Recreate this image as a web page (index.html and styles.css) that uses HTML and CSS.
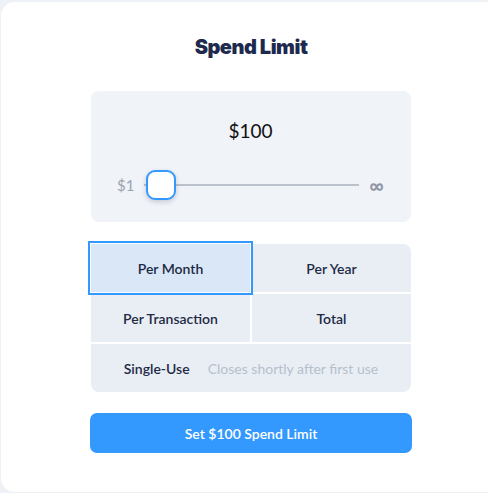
FILE: index.html
```html
<!DOCTYPE html>
<html lang="en">
<head>
<meta charset="UTF-8">
<meta name="viewport" content="width=device-width, initial-scale=1.0">
<title>Spend Limit</title>
<link rel="stylesheet" href="styles.css">
</head>
<body>
  <div class="card">
    <div class="content">
      <h1 class="title">Spend Limit</h1>

      <div class="amount-panel">
        <div class="amount">$100</div>
        <div class="slider">
          <span class="slider-label">$1</span>
          <div class="track">
            <div class="thumb"></div>
          </div>
          <span class="slider-label infinity">&infin;</span>
        </div>
      </div>

      <div class="periods">
        <div class="period selected">Per Month</div>
        <div class="period top-right">Per Year</div>
        <div class="period">Per Transaction</div>
        <div class="period">Total</div>
        <div class="period wide">
          <span>Single-Use</span>
          <span class="hint">Closes shortly after first use</span>
        </div>
      </div>

      <button class="submit">Set $100 Spend Limit</button>
    </div>
  </div>
</body>
</html>
```

FILE: styles.css
```css
html, body {
  margin: 0;
  height: 100%;
  overflow: hidden;
}

body {
  background-color: #eef1f5;
  font-family: Lato, "Liberation Sans", sans-serif;
  color: #1e2a44;
}

.card {
  margin: 2px 0 0 1px;
  width: 500px;
  height: 490px;
  background-color: #fff;
  border-radius: 14px;
  display: flex;
  justify-content: center;
}

.content {
  width: 320px;
  display: flex;
  flex-direction: column;
}

.title {
  margin: 33px 0 0;
  height: 56px;
  font-family: Inter, sans-serif;
  font-weight: 900;
  font-size: 20px;
  letter-spacing: -0.5px;
  line-height: 24px;
  text-align: center;
  color: #1d2a4d;
}

.amount-panel {
  background-color: #f0f3f8;
  border-radius: 8px;
  padding: 28px 27px 22px 26px;
}

.amount {
  font-size: 19px;
  line-height: 24px;
  text-align: center;
  color: #111;
}

.slider {
  margin-top: 27px;
  height: 30px;
  display: flex;
  align-items: center;
  gap: 10px;
}

.slider-label {
  font-size: 15px;
  color: #9aa2b0;
}

.infinity {
  font-size: 20px;
  font-weight: 700;
  color: #8e96a6;
}

.track {
  flex: 1;
  height: 2px;
  background-color: #bcc2cc;
  position: relative;
}

.thumb {
  position: absolute;
  left: 2px;
  top: -14px;
  width: 30px;
  height: 30px;
  box-sizing: border-box;
  border: 2px solid #3399ff;
  border-radius: 9px;
  background-color: #fff;
  box-shadow: 0 2px 5px rgba(30, 42, 68, 0.2);
}

.periods {
  margin-top: 22px;
  display: grid;
  grid-template-columns: 1fr 1fr;
  gap: 2px;
}

.period {
  height: 48px;
  display: flex;
  justify-content: center;
  align-items: center;
  gap: 18px;
  background-color: #e9eef5;
  font-size: 14px;
  font-weight: 600;
}

.period.selected {
  position: relative;
  z-index: 1;
  background-color: #d9e7f7;
  outline: 2px solid #3399ff;
  outline-offset: 1px;
}

.period.top-right {
  border-top-right-radius: 8px;
}

.period.wide {
  grid-column: span 2;
  border-radius: 0 0 8px 8px;
}

.hint {
  font-weight: 400;
  color: #b6c0cc;
}

.submit {
  margin: 21px -1px 0;
  height: 40px;
  border: none;
  border-radius: 7px;
  background-color: #3399fe;
  color: #fff;
  font-family: Lato, "Liberation Sans", sans-serif;
  font-size: 14px;
  font-weight: 600;
}
```
